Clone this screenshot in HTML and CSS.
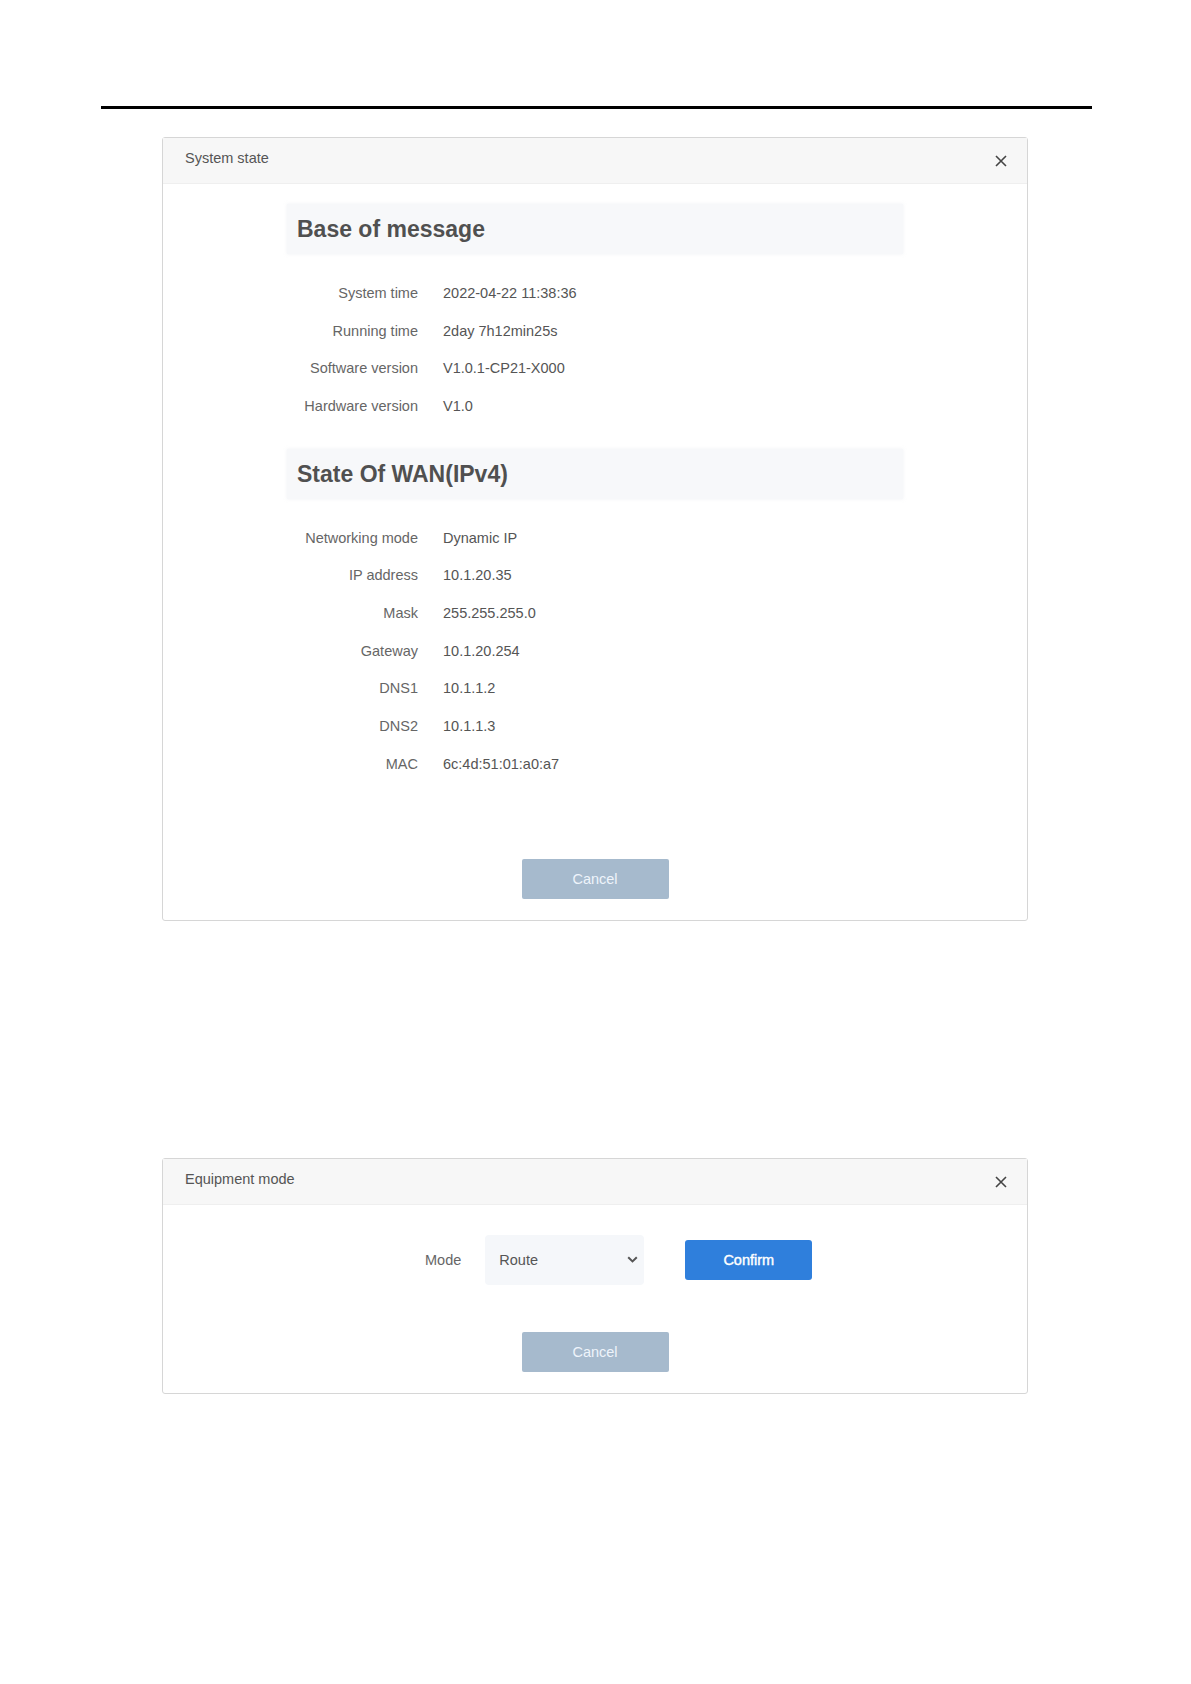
FILE: index.html
```html
<!DOCTYPE html>
<html lang="en">
  <head>
    <meta charset="UTF-8" />
    <meta name="viewport" content="width=device-width, initial-scale=1.0" />
    <title>System state</title>
    <link rel="stylesheet" href="styles.css">
  </head>
  <body>
    <div class="page">
      <div class="rule"></div>

      <div class="dialog dialog-state">
        <div class="dialog-header">
          <span class="dialog-title">System state</span>
          <svg class="close" width="12" height="12" viewBox="0 0 12 12">
            <path d="M1 1L11 11M11 1L1 11" stroke="#444" stroke-width="1.6" fill="none" />
          </svg>
        </div>
        <div class="dialog-body">
          <div class="section">
            <h2 class="section-title">Base of message</h2>
            <div class="rows">
              <div class="row"><span class="label">System time</span><span class="value">2022-04-22 11:38:36</span></div>
              <div class="row"><span class="label">Running time</span><span class="value">2day 7h12min25s</span></div>
              <div class="row"><span class="label">Software version</span><span class="value">V1.0.1-CP21-X000</span></div>
              <div class="row"><span class="label">Hardware version</span><span class="value">V1.0</span></div>
            </div>
          </div>
          <div class="section">
            <h2 class="section-title">State Of WAN(IPv4)</h2>
            <div class="rows">
              <div class="row"><span class="label">Networking mode</span><span class="value">Dynamic IP</span></div>
              <div class="row"><span class="label">IP address</span><span class="value">10.1.20.35</span></div>
              <div class="row"><span class="label">Mask</span><span class="value">255.255.255.0</span></div>
              <div class="row"><span class="label">Gateway</span><span class="value">10.1.20.254</span></div>
              <div class="row"><span class="label">DNS1</span><span class="value">10.1.1.2</span></div>
              <div class="row"><span class="label">DNS2</span><span class="value">10.1.1.3</span></div>
              <div class="row"><span class="label">MAC</span><span class="value">6c:4d:51:01:a0:a7</span></div>
            </div>
          </div>
          <div class="actions actions-state">
            <button type="button" class="btn-cancel">Cancel</button>
          </div>
        </div>
      </div>

      <div class="dialog dialog-mode">
        <div class="dialog-header">
          <span class="dialog-title">Equipment mode</span>
          <svg class="close" width="12" height="12" viewBox="0 0 12 12">
            <path d="M1 1L11 11M11 1L1 11" stroke="#444" stroke-width="1.6" fill="none" />
          </svg>
        </div>
        <div class="dialog-body">
          <div class="mode-row">
            <span class="mode-label">Mode</span>
            <div class="select">
              <span>Route</span>
              <svg width="11" height="7" viewBox="0 0 11 7">
                <path d="M1.2 1.2L5.5 5.4L9.8 1.2" stroke="#555" stroke-width="2" fill="none" />
              </svg>
            </div>
            <button type="button" class="btn-confirm">Confirm</button>
          </div>
          <div class="actions actions-mode">
            <button type="button" class="btn-cancel">Cancel</button>
          </div>
        </div>
      </div>
    </div>
  </body>
</html>
```

FILE: styles.css
```css
body {
  margin: 0;
  background-color: #fff;
  font-family: "Liberation Sans", Arial, sans-serif;
  font-size: 14.5px;
  color: #606060;
}

.page {
  padding-top: 106px;
}

.rule {
  height: 3px;
  background-color: #000;
  margin-left: 101px;
  width: 991px;
}

.dialog {
  margin-left: 162px;
  width: 866px;
  box-sizing: border-box;
  border: 1px solid #d6d6d6;
  border-radius: 3px;
  background-color: #fff;
}

.dialog-state {
  margin-top: 28px;
}

.dialog-mode {
  margin-top: 237px;
}

.dialog-header {
  display: flex;
  justify-content: space-between;
  align-items: center;
  height: 46px;
  padding: 0 20px 5px 22px;
  box-sizing: border-box;
  background-color: #f7f7f7;
  border-bottom: 1px solid #efefef;
}

.dialog-title {
  color: #555;
}

.close {
  margin-top: 6px;
}

.dialog-body {
  padding: 20px 0 21px;
}

.section {
  width: 616px;
  margin: 0 auto;
}

.section + .section {
  margin-top: 24px;
}

.section-title {
  margin: 0;
  height: 50px;
  line-height: 50px;
  padding-left: 10px;
  font-size: 23px;
  font-weight: bold;
  color: #505050;
  background-color: #f7f8fa;
  box-shadow: 0 0 3px rgba(225, 229, 235, 0.5);
}

.rows {
  margin-top: 20px;
}

.row {
  display: flex;
  align-items: center;
  height: 37.7px;
}

.label {
  width: 131px;
  text-align: right;
  color: #666;
}

.value {
  margin-left: 25px;
  color: #555;
}

.actions {
  display: flex;
  justify-content: center;
}

.actions-state {
  margin-top: 76px;
}

.actions-mode {
  margin-top: 47px;
}

.btn-cancel {
  width: 147px;
  height: 40px;
  border: none;
  border-radius: 2px;
  background-color: #a6bacd;
  color: #eef4fb;
  font-family: inherit;
  font-size: 14.5px;
  cursor: pointer;
}

.mode-row {
  display: flex;
  align-items: center;
  padding-left: 262px;
  margin-top: 10px;
}

.mode-label {
  color: #666;
}

.select {
  display: flex;
  justify-content: space-between;
  align-items: center;
  width: 159px;
  height: 50px;
  box-sizing: border-box;
  margin-left: 24px;
  padding: 0 6px 0 14px;
  background-color: #f5f7fa;
  border-radius: 4px;
  color: #555;
}

.btn-confirm {
  margin-left: 41px;
  width: 127px;
  height: 40px;
  border: none;
  border-radius: 3px;
  background-color: #2f7fdc;
  color: #fff;
  font-family: inherit;
  font-size: 14.5px;
  -webkit-text-stroke: 0.4px #fff;
  cursor: pointer;
}
```
